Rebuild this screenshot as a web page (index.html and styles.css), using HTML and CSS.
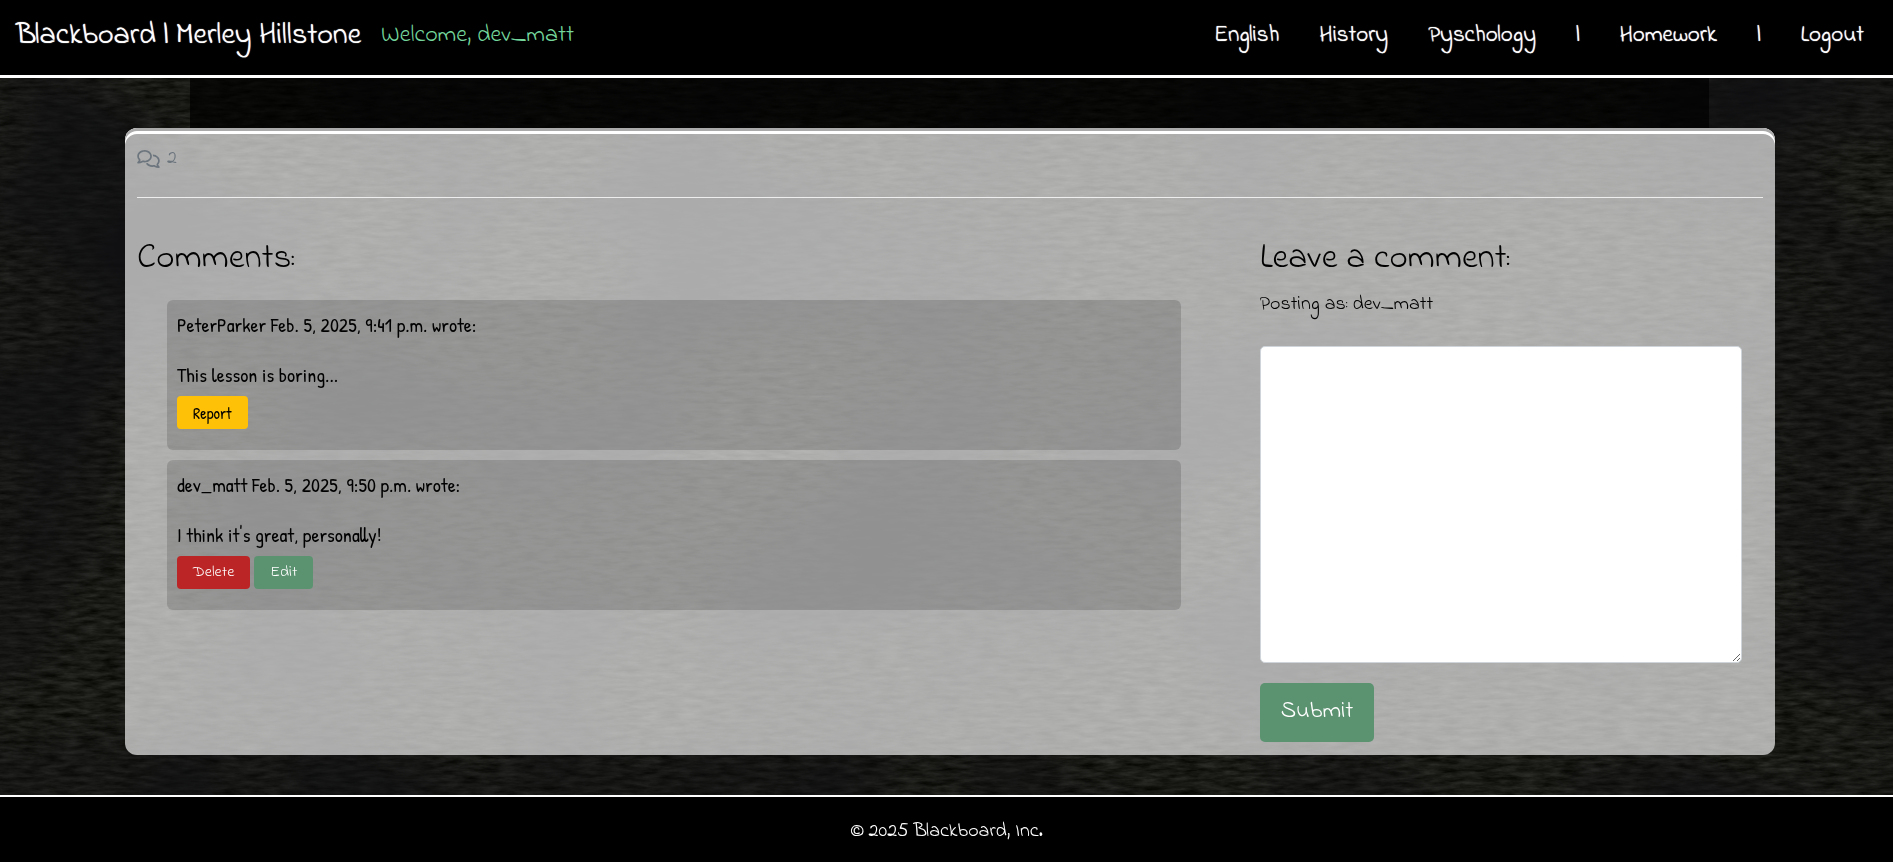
FILE: index.html
```html
<!DOCTYPE html>
<html lang="en">
<head>
<meta charset="utf-8">
<meta name="viewport" content="width=device-width, initial-scale=1">
<title>Blackboard | Merley Hillstone</title>
<link rel="stylesheet" href="styles.css">
</head>
<body>
<svg class="slate" aria-hidden="true">
  <filter id="grain" x="0" y="0" width="100%" height="100%" color-interpolation-filters="sRGB">
    <feTurbulence type="fractalNoise" baseFrequency="0.05 0.22" numOctaves="4" seed="8"/>
    <feColorMatrix values="0.2 0 0 0 -0.002  0.2 0 0 0 0  0.2 0 0 0 -0.016  0 0 0 0 1"/>
  </filter>
  <filter id="clouds" x="0" y="0" width="100%" height="100%" color-interpolation-filters="sRGB">
    <feTurbulence type="fractalNoise" baseFrequency="0.005 0.006" numOctaves="2" seed="3"/>
    <feColorMatrix values="0 0 0 0 0.06  0 0 0 0 0.06  0 0 0 0 0.07  2 0 0 0 -0.7"/>
  </filter>
  <rect width="100%" height="100%" filter="url(#grain)"/>
  <rect width="100%" height="100%" filter="url(#clouds)"/>
</svg>
<header class="navbar">
  <a class="brand" href="#">Blackboard | Merley Hillstone</a>
  <span class="welcome">Welcome, dev_matt</span>
  <nav class="links">
    <a href="#">English</a>
    <a href="#">History</a>
    <a href="#">Pyschology</a>
    <span>|</span>
    <a href="#">Homework</a>
    <span>|</span>
    <a href="#">Logout</a>
  </nav>
</header>
<main>
  <div class="shade"></div>
  <section class="board">
    <div class="count">
      <svg viewBox="0 0 640 512" aria-hidden="true"><path d="M88.200 309.100c9.800-18.300 6.800-40.800-7.500-55.800C59.400 230.900 48 204 48 176c0-63.500 63.800-128 160-128s160 64.500 160 128s-63.800 128-160 128c-13.100 0-25.800-1.300-37.800-3.600c-10.400-2-21.200-.6-30.700 4.200c-4.100 2.100-8.300 4.100-12.600 6c-16 7.200-32.900 13.500-49.900 18c2.800-4.600 5.400-9.100 7.900-13.600c1.100-1.900 2.200-3.900 3.200-5.900zM208 352c114.900 0 208-78.800 208-176S322.900 0 208 0S0 78.800 0 176c0 41.800 17.200 80.100 45.900 110.300c-.9 1.700-1.900 3.500-2.800 5.100c-10.300 18.400-22.300 36.500-36.600 52.100c-6.600 7-8.300 17.200-4.600 25.900C5.800 378.300 14.400 384 24 384c43 0 86.500-13.300 122.700-29.700c4.800-2.200 9.600-4.500 14.200-6.800c15.100 3 30.900 4.500 47.100 4.500zM432 480c16.200 0 31.900-1.600 47.100-4.500c4.600 2.300 9.400 4.600 14.200 6.800C529.500 498.700 573 512 616 512c9.600 0 18.200-5.700 22-14.500c3.800-8.800 2-19-4.600-25.900c-14.200-15.600-26.200-33.700-36.600-52.100c-.9-1.700-1.900-3.400-2.800-5.100C622.800 384.100 640 345.800 640 304c0-94.400-87.900-171.500-198.200-175.800c4.100 15.200 6.200 31.200 6.200 47.800l0 .6c87.200 6.700 144 67.500 144 127.400c0 28-11.400 54.900-32.700 77.200c-14.300 15-17.300 37.600-7.500 55.800c1.100 2 2.200 4 3.200 5.900c2.500 4.500 5.200 9 7.900 13.600c-17-4.500-33.900-10.700-49.900-18c-4.300-1.900-8.500-3.900-12.600-6c-9.500-4.800-20.300-6.200-30.700-4.200c-12.100 2.400-24.700 3.600-37.800 3.600c-61.700 0-110-26.500-136.800-62.300c-16 5.400-32.800 9.400-50 11.800C279 439.800 350 480 432 480z"/></svg>
      <span>2</span>
    </div>
    <hr>
    <div class="columns">
      <section>
        <h3>Comments:</h3>
        <div class="comments">
          <article class="comment">
            <p>PeterParker Feb. 5, 2025, 9:41 p.m. wrote:</p>
            <p>This lesson is boring...</p>
            <div class="actions"><button class="btn report" type="button">Report</button></div>
          </article>
          <article class="comment">
            <p>dev_matt Feb. 5, 2025, 9:50 p.m. wrote:</p>
            <p>I think it's great, personally!</p>
            <div class="actions"><button class="btn delete" type="button">Delete</button><button class="btn edit" type="button">Edit</button></div>
          </article>
        </div>
      </section>
      <form>
        <h3><label for="body">Leave a comment:</label></h3>
        <p class="posting">Posting as: dev_matt</p>
        <textarea id="body"></textarea>
        <button class="submit" type="submit">Submit</button>
      </form>
    </div>
  </section>
</main>
<footer>© 2025 Blackboard, Inc.</footer>
</body>
</html>
```
FILE: styles.css
```css
* { box-sizing: border-box; }
body {
  margin: 0;
  min-height: 100vh;
  display: flex;
  flex-direction: column;
  background: #11120f;
  color: #000;
  font-family: "Indie Flower", Lato, sans-serif;
  font-size: 20px;
  line-height: 24px;
}
.slate { position: fixed; inset: 0; width: 100%; height: 100%; z-index: -1; }
p, h3 { margin: 0; }
a { color: inherit; text-decoration: none; }

.navbar {
  display: flex;
  align-items: center;
  padding: 0 29px 4px 16px;
  min-height: 78px;
  background: #000;
  border-bottom: 3px solid #fff;
  color: #fff;
}
.brand { font-size: 30px; }
.welcome { margin-left: 20px; font-size: 24px; color: #74d69c; }
.links { display: flex; gap: 40px; margin-left: auto; font-size: 23px; }
.brand, .links { text-shadow: 0 0 1px #fff; }

main { flex: 1; }
.shade { height: 50px; margin: 0 184px 0 190px; background: rgba(0, 0, 0, 0.7); }
.board {
  margin: 0 118px 40px 125px;
  padding: 15px 12px 13px;
  border-radius: 12px;
  background: rgba(255, 255, 255, 0.65);
  box-shadow: inset 0 3px #aaa, inset 0 6px #fff;
}
.count { display: flex; align-items: center; gap: 7px; height: 31px; color: #6c757d; }
.count svg { width: 23px; height: 18px; fill: currentColor; }
hr { margin: 23px 0 47px; border: 0; border-top: 1px solid #eee; }
.columns {
  display: grid;
  grid-template-columns: 1043fr 482fr;
  gap: 79px;
  padding-right: 21px;
}
h3 { font-size: 35px; line-height: 28px; font-weight: 400; }
.comments { display: grid; gap: 10px; margin: 27px 0 0 30px; }
.comment {
  min-height: 150px;
  padding: 13px 10px;
  border-radius: 6px;
  background: rgba(0, 0, 0, 0.15);
  font-family: "Patrick Hand", "Liberation Sans Narrow", Lato, sans-serif;
}
.comment p + p { margin-top: 26px; }
.actions { display: flex; gap: 4px; margin-top: 9px; }
button { border: 0; cursor: pointer; color: #fff; font: inherit; }
.btn { height: 33px; padding: 0 16px 2px; border-radius: 4px; font-size: 16px; line-height: 24px; }
.report { padding-bottom: 0; background: #ffc107; color: #000; }
.delete, .edit { font-family: "Indie Flower", Lato, sans-serif; }
.delete { background: #bb2525; }
.edit, .submit { background: #5b9270; }
.posting { margin: 20px 0 29px; }
textarea {
  display: block;
  width: 100%;
  height: 317px;
  padding: 8px 12px;
  border: 1px solid #ced4da;
  border-radius: 5px;
  background: #fff;
  font: inherit;
}
.submit { height: 59px; margin-top: 20px; padding: 0 21px 2px; border-radius: 5px; font-size: 24px; }
footer {
  min-height: 67px;
  padding-top: 23px;
  border-top: 2px solid #fff;
  background: #000;
  color: #fff;
  text-align: center;
}
```
